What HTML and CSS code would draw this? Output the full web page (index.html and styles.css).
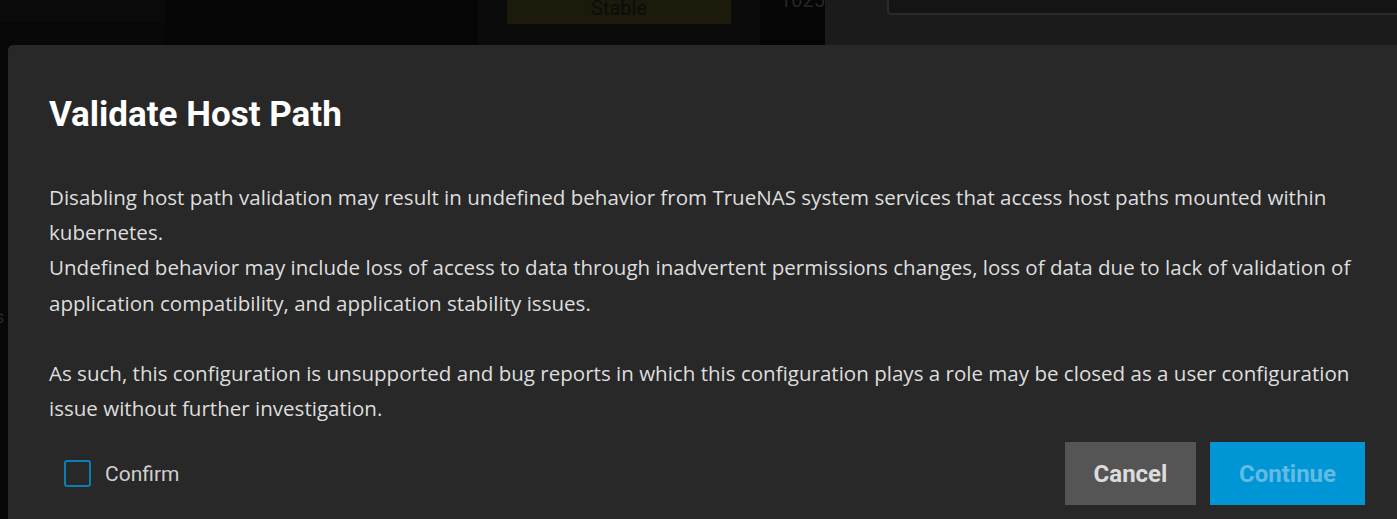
FILE: index.html
```html
<!DOCTYPE html>
<html lang="en">
<head>
<meta charset="utf-8">
<title>Validate Host Path</title>
<link rel="stylesheet" href="styles.css">
</head>
<body>
<div class="backdrop-top">
  <div class="bg-col bg-col-a"><div class="bg-col-a-head"></div></div>
  <div class="bg-col bg-col-b"></div>
  <div class="bg-col bg-col-c">
    <div class="bg-chip">Stable</div>
  </div>
  <div class="bg-col bg-col-d"><span class="bg-num">1025</span></div>
  <div class="bg-col bg-col-e"><div class="bg-input"></div></div>
</div>
<div class="main-row">
  <div class="gutter"><span class="gutter-text">s</span></div>
  <section class="dialog">
    <h1 class="dialog-title">Validate Host Path</h1>
    <div class="dialog-body">
      <p>Disabling host path validation may result in undefined behavior from TrueNAS system services that access host paths mounted within kubernetes.<br>Undefined behavior may include loss of access to data through inadvertent permissions changes, loss of data due to lack of validation of application compatibility, and application stability issues.</p>
      <p class="gap">As such, this configuration is unsupported and bug reports in which this configuration plays a role may be closed as a user configuration issue without further investigation.</p>
    </div>
    <div class="dialog-footer">
      <label class="confirm">
        <span class="checkbox"></span>
        <span class="confirm-label">Confirm</span>
      </label>
      <div class="actions">
        <button class="btn btn-cancel">Cancel</button>
        <button class="btn btn-continue" disabled>Continue</button>
      </div>
    </div>
  </section>
</div>
</body>
</html>
```

FILE: styles.css
```css
html, body {
  margin: 0;
  padding: 0;
}
body {
  background: #080808;
  width: 1397px;
  height: 519px;
  overflow: hidden;
  font-family: "Open Sans", "Noto Sans", sans-serif;
}

/* dimmed page behind the dialog */
.backdrop-top {
  display: flex;
  height: 45px;
}
.bg-col {
  height: 100%;
  overflow: hidden;
}
.bg-col-a {
  width: 165px;
  background: #080808;
}
.bg-col-a-head {
  height: 20px;
  background: #0a0a0a;
  border-bottom: 1px solid #0d0d0d;
}
.bg-col-b {
  width: 313px;
  background: #060606;
}
.bg-col-c {
  width: 282px;
  background: #0b0b0b;
  padding-left: 29px;
  box-sizing: border-box;
}
.bg-chip {
  width: 224px;
  height: 24px;
  background: #1b1a0b;
  color: #0c0c0a;
  font-family: "Roboto", sans-serif;
  font-size: 20px;
  line-height: 16px;
  text-align: center;
}
.bg-col-d {
  width: 65px;
  background: #050505;
  padding-left: 20px;
  box-sizing: border-box;
}
.bg-num {
  display: block;
  margin-top: -12px;
  color: #262626;
  font-family: "Roboto", sans-serif;
  font-size: 20px;
  line-height: 24px;
}
.bg-col-e {
  flex: 1;
  background: #1b1b1b;
  padding-left: 62px;
}
.bg-input {
  height: 13px;
  background: #141414;
  border: 2px solid #2a2a2a;
  border-top: none;
  border-right: none;
  border-bottom-left-radius: 4px;
}

.main-row {
  display: flex;
  height: 474px;
}
.gutter {
  width: 8px;
  overflow: hidden;
  padding-top: 262px;
  box-sizing: border-box;
}
.gutter-text {
  display: block;
  margin-left: -5px;
  color: #222838;
  font-family: "Roboto", sans-serif;
  font-size: 18px;
  line-height: 20px;
}

.dialog {
  flex: 1;
  background: #282828;
  border-top-left-radius: 5px;
  padding: 0 32px 0 41px;
  box-sizing: border-box;
  display: flex;
  flex-direction: column;
}
.dialog-title {
  margin: 49px 0 0;
  font-family: "Roboto", sans-serif;
  font-weight: 700;
  font-size: 35px;
  line-height: 42px;
  color: #ffffff;
}
.dialog-body {
  margin-top: 44px;
  color: #dedede;
  font-size: 20.55px;
  line-height: 35.2px;
}
.dialog-body p {
  margin: 0;
}
.dialog-body p.gap {
  margin-top: 35.2px;
}

.dialog-footer {
  margin-top: 16px;
  display: flex;
  align-items: center;
  justify-content: space-between;
}
.confirm {
  display: flex;
  align-items: center;
  gap: 14px;
  margin-left: 15px;
}
.checkbox {
  width: 27px;
  height: 27px;
  box-sizing: border-box;
  border: 2.5px solid #0b7db5;
  border-radius: 3px;
}
.confirm-label {
  font-family: "Roboto", sans-serif;
  font-size: 21px;
  color: #cfcfcf;
}
.actions {
  display: flex;
  gap: 14px;
}
.btn {
  height: 63px;
  border: none;
  border-radius: 0;
  font-family: "Roboto", sans-serif;
  font-weight: 700;
  font-size: 24px;
  padding: 0;
}
.btn-cancel {
  width: 131px;
  background: #555555;
  color: #dcdcdc;
}
.btn-continue {
  width: 155px;
  background: #0095d5;
  color: #62bbe4;
}
```
